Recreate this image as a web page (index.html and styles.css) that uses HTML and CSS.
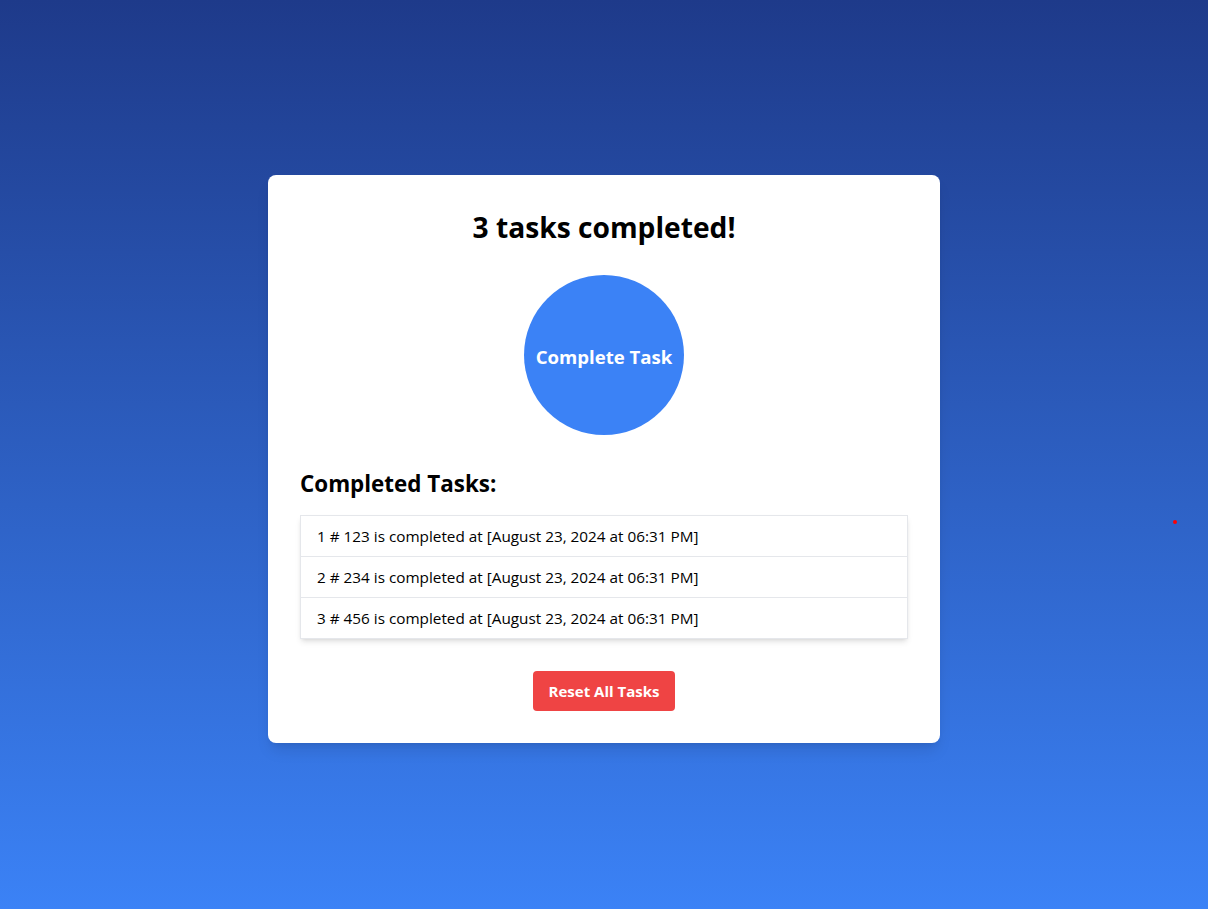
FILE: index.html
```html
<!DOCTYPE html>
<html lang="en">
<head>
<meta charset="utf-8">
<title>Tasks</title>
<link rel="stylesheet" href="styles.css">
</head>
<body>
<main class="page">
  <section class="card">
    <h1 class="title">3 tasks completed!</h1>
    <div class="circle-wrap">
      <button class="circle">Complete Task</button>
    </div>
    <h2 class="subtitle">Completed Tasks:</h2>
    <ul class="list">
      <li class="item">1 # 123 is completed at [August 23, 2024 at 06:31 PM]</li>
      <li class="item">2 # 234 is completed at [August 23, 2024 at 06:31 PM]</li>
      <li class="item">3 # 456 is completed at [August 23, 2024 at 06:31 PM]</li>
    </ul>
    <div class="actions">
      <button class="reset">Reset All Tasks</button>
    </div>
  </section>
  <span class="dot"></span>
</main>
</body>
</html>
```
FILE: styles.css
```css
* { box-sizing: border-box; }
html, body { margin: 0; padding: 0; }
body {
  font-family: "Open Sans", "Noto Sans", "Liberation Sans", sans-serif;
  color: #000;
}
.page {
  position: relative;
  min-height: 909px;
  background: linear-gradient(to bottom, #1e3a8a, #3b82f6);
  display: flex;
  align-items: center;
  justify-content: center;
  padding-top: 9px;
}
.card {
  width: 672px;
  background: #fff;
  border-radius: 8px;
  padding: 32px;
  box-shadow: 0 10px 15px -3px rgba(0,0,0,0.1), 0 4px 6px -4px rgba(0,0,0,0.1);
}
.title {
  margin: 0 0 32px;
  font-size: 28.2px;
  line-height: 36px;
  padding-top: 2px;
  height: 36px;
  font-weight: 700;
  text-align: center;
}
.circle-wrap {
  display: flex;
  justify-content: center;
  margin-bottom: 32px;
}
.circle {
  width: 160px;
  height: 160px;
  border-radius: 50%;
  border: none;
  background: #3b82f6;
  color: #fff;
  font-family: inherit;
  font-size: 18.6px;
  font-weight: 700;
  padding: 2px 0 0;
}
.subtitle {
  margin: 0 0 16px;
  font-size: 22.4px;
  line-height: 32px;
  padding-top: 1px;
  height: 32px;
  font-weight: 700;
}
.list {
  list-style: none;
  margin: 0;
  padding: 0;
  border: 1px solid #e5e7eb;
  box-shadow: 0 4px 6px -1px rgba(0,0,0,0.1), 0 2px 4px -2px rgba(0,0,0,0.1);
}
.item {
  padding: 8px 16px;
  font-size: 15.3px;
  line-height: 24px;
  border-bottom: 1px solid #e5e7eb;
}
.item:last-child { border-bottom: none; }
.actions {
  display: flex;
  justify-content: center;
  margin-top: 32px;
}
.reset {
  height: 40px;
  padding: 0 16px;
  border: none;
  border-radius: 4px;
  background: #ef4444;
  color: #fff;
  font-family: inherit;
  font-size: 15px;
  font-weight: 700;
}
.dot {
  position: absolute;
  left: 1173px;
  top: 520px;
  width: 4px;
  height: 4px;
  border-radius: 50%;
  background: #ff0000;
}
```
